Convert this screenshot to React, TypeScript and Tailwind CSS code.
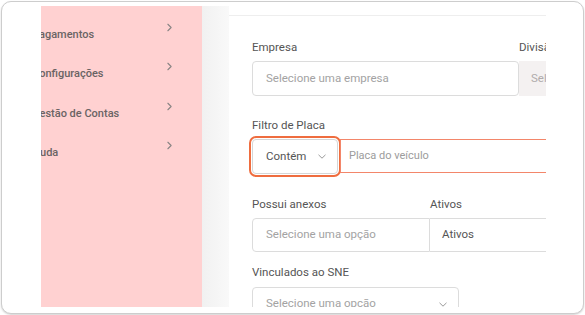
import { ChevronRight } from "lucide-react";

const menu = [
  { label: "Pagamentos", shift: "-ml-[9px]" },
  { label: "Configurações", shift: "-ml-[9px]" },
  { label: "Gestão de Contas", shift: "-ml-[9px]" },
  { label: "Ajuda", shift: "-ml-[11px]" },
];

function ChevronDown() {
  return (
    <svg width="8" height="5" viewBox="0 0 8 5" fill="none">
      <path d="M0.5 0.8L4 4.2L7.5 0.8" stroke="#9a9a9a" strokeWidth="1" />
    </svg>
  );
}

function Label({ children }: { children: React.ReactNode }) {
  return <div className="h-[14px] text-[11.5px] leading-[14px] text-[#555]">{children}</div>;
}

export default function App() {
  return (
    <div className="w-[585px] h-[315px] bg-white p-px font-['Roboto',sans-serif]">
      <div className="h-[313px] w-[583px] rounded-[10px] border border-[#cdcdcd] bg-white pl-[39px] pt-[4px] shadow-[0_1px_2px_rgba(0,0,0,0.18)]">
        <div className="flex h-[301px] w-[505px] overflow-hidden">
          {/* sidebar */}
          <div className="w-[161px] shrink-0 overflow-hidden bg-[#ffd1d1] pt-[8px]">
            {menu.map((m) => (
              <div key={m.label} className="flex h-[39.3px] justify-between pr-[26px]">
                <span
                  className={`${m.shift} mt-[14px] whitespace-nowrap text-[11px] font-medium leading-[14px] text-[#6a6464]`}
                >
                  {m.label}
                </span>
                <ChevronRight className="mt-[7px] h-[13px] w-[13px] text-[#8a8585]" strokeWidth={2} />
              </div>
            ))}
          </div>

          <div className="w-[27px] shrink-0 bg-linear-to-r from-[#f1f1f1] to-[#f9f9f9]" />

          {/* main */}
          <div className="w-[317px] shrink-0 overflow-hidden bg-white pt-[9px]">
            <div className="h-full border-t border-[#eeeeee] pl-[23px] pt-[24px]">
              <div className="flex">
                <div className="w-[267px] shrink-0">
                  <Label>Empresa</Label>
                  <div className="mt-[7px] flex h-[35px] items-center rounded-[4px] border border-[#dcdcdc] px-[13px] text-[11.5px] text-[#a3a3a3]">
                    Selecione uma empresa
                  </div>
                </div>
                <div className="w-[120px] shrink-0">
                  <Label>Divisão</Label>
                  <div className="mt-[7px] flex h-[35px] items-center bg-[#f4f1f1] pl-[12px] text-[11.5px] text-[#b0acac] whitespace-nowrap">
                    Selecione uma divisão
                  </div>
                </div>
              </div>

              <div className="mt-[22px]">
                <Label>Filtro de Placa</Label>
                <div className="mt-[7px] flex">
                  <div className="flex h-[35px] w-[86px] shrink-0 items-center justify-between rounded-[4px] border border-[#d6d6d6] pl-[13px] pr-[11px] text-[11.5px] text-[#555] outline-2 outline-offset-[1.5px] outline-[#ef6d3f]">
                    Contém
                    <ChevronDown />
                  </div>
                  <div className="ml-[2px] flex h-[34px] w-[240px] shrink-0 items-center border border-[#f3866a] pl-[8px] text-[11px] text-[#9c9c9c]">
                    Placa do veículo
                  </div>
                </div>
              </div>

              <div className="mt-[23px] flex">
                <div className="w-[178px] shrink-0">
                  <Label>Possui anexos</Label>
                  <div className="mt-[7px] flex h-[34px] items-center rounded-l-[4px] border border-[#dcdcdc] px-[13px] text-[11.5px] text-[#a3a3a3]">
                    Selecione uma opção
                  </div>
                </div>
                <div className="w-[120px] shrink-0">
                  <Label>Ativos</Label>
                  <div className="mt-[7px] flex h-[34px] items-center border-y border-r border-[#dcdcdc] pl-[12px] text-[11.5px] text-[#555]">
                    Ativos
                  </div>
                </div>
              </div>

              <div className="mt-[13px]">
                <Label>Vinculados ao SNE</Label>
                <div className="mt-[8px] flex h-[34px] w-[207px] items-center justify-between rounded-[4px] border border-[#dcdcdc] pl-[13px] pr-[11px] text-[11.5px] text-[#a3a3a3]">
                  Selecione uma opção
                  <ChevronDown />
                </div>
              </div>
            </div>
          </div>
        </div>
      </div>
    </div>
  );
}
